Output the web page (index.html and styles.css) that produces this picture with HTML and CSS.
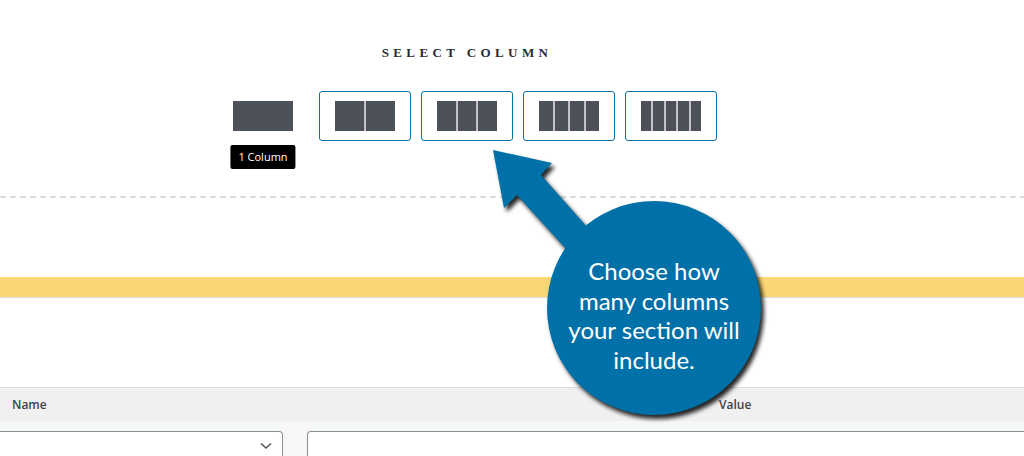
FILE: index.html
```html
<!DOCTYPE html>
<html lang="en">

<head>
  <meta charset="UTF-8">
  <title>Select Column</title>
  <link rel="stylesheet" href="styles.css">
</head>

<body>
  <section class="picker">
    <h3 class="picker-title">SELECT COLUMN</h3>
    <div class="options">
      <div class="option option-active">
        <div class="cols"><span></span></div>
        <div class="tooltip">1 Column</div>
      </div>
      <div class="option">
        <div class="cols"><span></span><span></span></div>
      </div>
      <div class="option">
        <div class="cols"><span></span><span></span><span></span></div>
      </div>
      <div class="option">
        <div class="cols"><span></span><span></span><span></span><span></span></div>
      </div>
      <div class="option">
        <div class="cols"><span></span><span></span><span></span><span></span><span></span></div>
      </div>
    </div>
  </section>

  <div class="divider"></div>

  <div class="notice"></div>

  <div class="fields">
    <div class="fields-head">
      <div class="col-name">Name</div>
      <div class="col-value">Value</div>
    </div>
    <div class="fields-row">
      <div class="select">
        <svg width="12" height="8" viewBox="0 0 12 8">
          <path d="M1 1.5 L6 6 L11 1.5" fill="none" stroke="#50575e" stroke-width="1.6" />
        </svg>
      </div>
      <div class="input"></div>
    </div>
  </div>

  <!-- annotation drawn over the page -->
  <div class="callout">
    <svg class="callout-shape" width="1024" height="456" viewBox="0 0 1024 456">
      <polygon points="493,150 552,163 541,175 604,246 578,262 517,195 504,208" fill="#0070a8" />
      <circle cx="654" cy="308" r="107" fill="#0070a8" />
    </svg>
    <div class="callout-text">Choose how<br>many columns<br>your section will<br>include.</div>
  </div>
</body>

</html>
```

FILE: styles.css
```css
body {
  margin: 0;
  background: #fff;
  font-family: 'Open Sans', sans-serif;
  overflow: hidden;
  position: relative;
  height: 456px;
}

.picker {
  width: 934px;
  padding-top: 45px;
  text-align: center;
}

.picker-title {
  margin: 0;
  font-family: 'Liberation Serif', serif;
  font-size: 13px;
  line-height: 16px;
  font-weight: bold;
  letter-spacing: 4.4px;
  color: #2a2c31;
}

.options {
  margin-top: 30px;
  display: flex;
  justify-content: center;
  gap: 10px;
}

.option {
  position: relative;
  box-sizing: border-box;
  width: 92px;
  height: 50px;
  border: 1px solid #0073aa;
  border-radius: 3px;
  display: flex;
  align-items: center;
  justify-content: center;
}

.option-active {
  border-color: transparent;
}

.cols {
  width: 60px;
  height: 30px;
  display: flex;
}

.cols span {
  flex: 1;
  background: #4d5159;
}

.cols span + span {
  border-left: 2px solid #c3c4c7;
}

.tooltip {
  position: absolute;
  top: 53px;
  left: 50%;
  transform: translateX(-50%);
  background: #000;
  color: #fff;
  font-size: 11px;
  line-height: 24px;
  padding: 0 8px;
  border-radius: 2px;
  white-space: nowrap;
}

.divider {
  margin-top: 55px;
  height: 2px;
  background: repeating-linear-gradient(90deg, #dcdcdc 0 6px, transparent 6px 10px);
}

.notice {
  margin-top: 79px;
  height: 20px;
  background: #fbd675;
  border-bottom: 1px solid #dcdcde;
}

.fields {
  margin-top: 89px;
  border-top: 1px solid #dcdcde;
}

.fields-head {
  display: flex;
  height: 33px;
  line-height: 33px;
  background: #f0f0f0;
  font-size: 12px;
  font-weight: 600;
  color: #3c434a;
}

.col-name {
  width: 707px;
  padding-left: 12px;
}

.fields-row {
  box-sizing: border-box;
  display: flex;
  gap: 24px;
  padding-top: 10px;
  height: 35px;
  background: #f6f7f7;
}

.select {
  box-sizing: border-box;
  margin-left: -10px;
  width: 293px;
  height: 25px;
  background: #fff;
  border: 1px solid #8c8f94;
  border-bottom: none;
  border-radius: 4px 4px 0 0;
  display: flex;
  justify-content: flex-end;
  padding: 10px 10px 0 0;
}

.input {
  flex: 1;
  margin-right: -20px;
  height: 25px;
  background: #fff;
  border: 1px solid #8c8f94;
  border-bottom: none;
  border-radius: 4px 4px 0 0;
}

.callout {
  position: absolute;
  top: 0;
  left: 0;
  width: 1024px;
  height: 456px;
  pointer-events: none;
}

.callout-shape {
  display: block;
  filter: drop-shadow(3px 4px 2px rgba(0, 0, 0, 0.85));
}

.callout-text {
  position: absolute;
  top: 256px;
  left: 547px;
  width: 214px;
  text-align: center;
  font-family: Lato, sans-serif;
  font-size: 24px;
  line-height: 29.5px;
  color: #fff;
}
```
